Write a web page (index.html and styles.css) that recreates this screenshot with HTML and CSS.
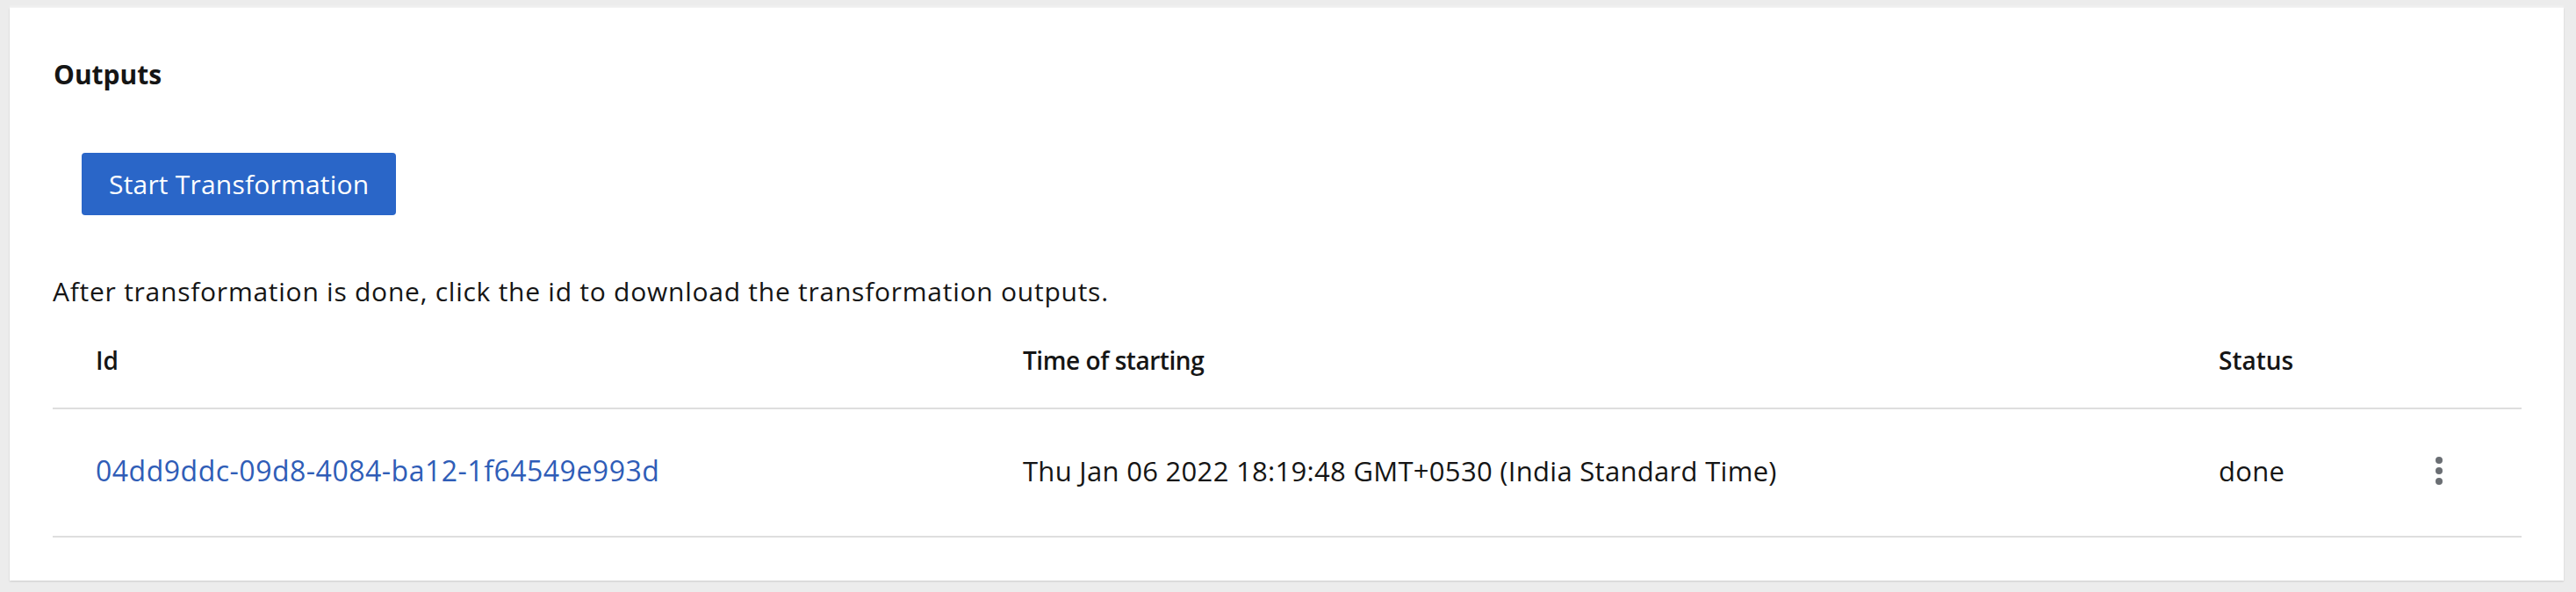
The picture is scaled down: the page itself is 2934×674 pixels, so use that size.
FILE: index.html
```html
<!DOCTYPE html>
<html lang="en">
<head>
<meta charset="utf-8">
<title>Outputs</title>
<link rel="stylesheet" href="styles.css">
</head>
<body>
<section class="card">
  <h2 class="card-title">Outputs</h2>
  <div class="actions">
    <button class="btn-primary" type="button">Start Transformation</button>
  </div>
  <p class="hint">After transformation is done, click the id to download the transformation outputs.</p>
  <div class="table">
    <div class="row head">
      <div class="cell c-id">Id</div>
      <div class="cell c-time">Time of starting</div>
      <div class="cell c-status">Status</div>
      <div class="cell c-act"></div>
    </div>
    <div class="row body">
      <div class="cell c-id"><a class="link" href="#">04dd9ddc-09d8-4084-ba12-1f64549e993d</a></div>
      <div class="cell c-time">Thu Jan 06 2022 18:19:48 GMT+0530 (India Standard Time)</div>
      <div class="cell c-status">done</div>
      <div class="cell c-act">
        <span class="kebab" aria-label="Actions"><i></i><i></i><i></i></span>
      </div>
    </div>
  </div>
</section>
</body>
</html>
```

FILE: styles.css
```css
html, body {
  margin: 0;
  padding: 0;
}
body {
  background: #ececec;
  font-family: "Open Sans", "Noto Sans", sans-serif;
  color: #151515;
  height: 674px;
  overflow: hidden;
}
.card {
  margin: 9px 14px 0 11px;
  background: #ffffff;
  box-shadow: 0 -1px 0 #f3f3f3, 0 -3px 0 #efefef, 0 1px 2px rgba(0,0,0,0.14);
  padding: 56px 48px 49px 49px;
  display: flex;
  flex-direction: column;
}
.card-title {
  margin: 0 0 0 1px;
  font-size: 30px;
  line-height: 40px;
  font-weight: 700;
}
.actions {
  margin-top: 69px;
  padding-left: 33px;
  display: flex;
}
.btn-primary {
  font-family: inherit;
  font-size: 30px;
  line-height: 41px;
  letter-spacing: 0.2px;
  padding: 15px 31px;
  border: 0;
  border-radius: 4px;
  background: #2a66c8;
  color: #ffffff;
}
.hint {
  margin: 67px 0 0 0;
  font-size: 30px;
  letter-spacing: 0.75px;
  line-height: 40px;
}
.table {
  display: flex;
  flex-direction: column;
}
.row {
  display: grid;
  grid-template-columns: 1056px 1362px 1fr 142px;
  border-bottom: 2px solid #dedede;
}
.row.head {
  padding: 38px 0 34px;
  font-weight: 600;
  font-size: 28px;
  line-height: 40px;
}
.row.head .c-time {
  letter-spacing: -0.45px;
}
.row.body {
  padding: 50px 0 54px;
  font-size: 31px;
  letter-spacing: 0.3px;
  line-height: 40px;
}
.cell {
  padding-left: 49px;
}
.c-act {
  padding-left: 44px;
  display: flex;
  align-items: center;
}
.link {
  color: #2f5db7;
  text-decoration: none;
  font-size: 32px;
  letter-spacing: 0.5px;
}
.kebab {
  display: flex;
  flex-direction: column;
  gap: 4px;
}
.kebab i {
  display: block;
  width: 8px;
  height: 8px;
  border-radius: 50%;
  background: #6a6e73;
}
```
